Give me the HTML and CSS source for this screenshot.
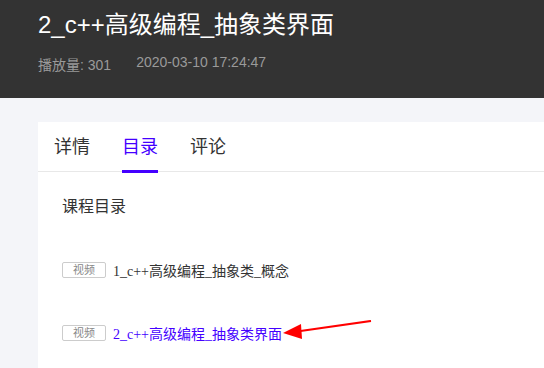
FILE: index.html
```html
<!DOCTYPE html>
<html lang="zh">
  <head>
    <meta charset="UTF-8" />
    <meta name="viewport" content="width=device-width, initial-scale=1.0" />
    <title>2_c++高级编程_抽象类界面</title>
    <link rel="stylesheet" href="styles.css">
  </head>
  <body>
    <!-- video header -->
    <div class="top">
      <h1 class="title">2_c++高级编程_抽象类界面</h1>
      <div class="meta">
        <span>播放量: 301</span>
        <span>2020-03-10 17:24:47</span>
      </div>
    </div>

    <div class="wrap">
      <div class="card">
        <div class="tabs">
          <span class="tab">详情</span>
          <span class="tab active">目录</span>
          <span class="tab">评论</span>
        </div>

        <div class="catalog">
          <div class="catalog-title">课程目录</div>

          <div class="item">
            <span class="tag">视频</span>
            <span class="name">1_c++高级编程_抽象类_概念</span>
          </div>

          <div class="item current">
            <span class="tag">视频</span>
            <span class="name">2_c++高级编程_抽象类界面</span>
          </div>
        </div>
      </div>
    </div>

    <svg class="arrow" width="100" height="24" viewBox="0 0 100 24">
      <line x1="88" y1="1" x2="14" y2="11.5" stroke="#ff0000" stroke-width="2.2" />
      <polygon points="0,13 18,4 19,19" fill="#ff0000" />
    </svg>
  </body>
</html>
```

FILE: styles.css
```css
body {
  margin: 0;
  background: #f4f5f9;
  font-family: "Liberation Sans", "Noto Sans CJK SC", sans-serif;
  overflow: hidden;
  position: relative;
}

.top {
  background: #333333;
  height: 98px;
  padding: 9px 38px 0;
  box-sizing: border-box;
}

.title {
  margin: 0;
  font-size: 24px;
  font-weight: normal;
  line-height: 32px;
  color: #ffffff;
}

.meta {
  margin-top: 13px;
  font-size: 14px;
  color: #9a9a9a;
  display: flex;
  gap: 25px;
}

.wrap {
  padding: 24px 0 0 38px;
}

.card {
  background: #ffffff;
  height: 260px;
}

.tabs {
  display: flex;
  gap: 32px;
  padding-left: 16px;
  height: 50px;
  border-bottom: 1px solid #e8e8e8;
  box-sizing: border-box;
}

.tab {
  font-size: 18px;
  color: #333333;
  line-height: 49px;
  padding-top: 1px;
  position: relative;
}

.tab.active {
  color: #4400ff;
}

.tab.active::after {
  content: "";
  position: absolute;
  left: 0;
  right: 0;
  bottom: -2px;
  height: 3px;
  background: #4400ff;
}

.catalog {
  padding: 24px 0 0 24px;
}

.catalog-title {
  font-size: 16px;
  color: #333333;
  line-height: 22px;
}

.item {
  display: flex;
  align-items: center;
  gap: 7px;
  margin-top: 41px;
  height: 22px;
}

.tag {
  width: 44px;
  height: 16px;
  box-sizing: border-box;
  border: 1px solid #cccccc;
  border-radius: 2px;
  font-size: 11px;
  line-height: 14px;
  color: #888888;
  text-align: center;
}

.name {
  font-family: "Liberation Serif", "Noto Sans CJK SC", serif;
  font-size: 14px;
  color: #333333;
}

.current .name {
  color: #4400ff;
}

.arrow {
  position: absolute;
  left: 283px;
  top: 320px;
}
```
